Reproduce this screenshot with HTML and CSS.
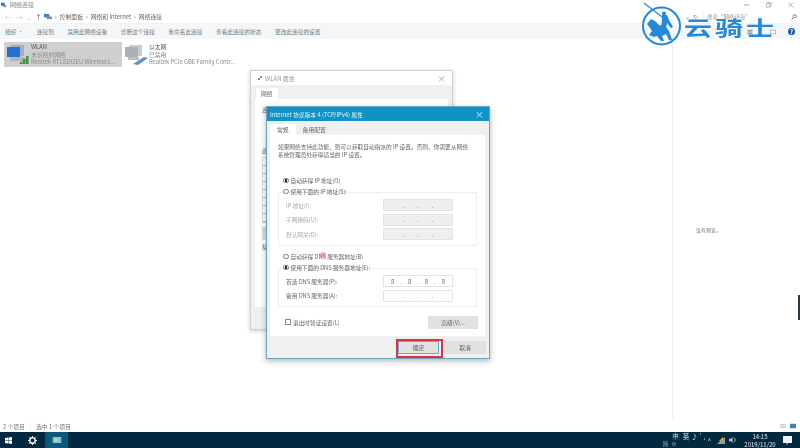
FILE: index.html
```html
<!DOCTYPE html>
<html lang="zh">
<head>
<meta charset="utf-8">
<title>网络连接</title>
<link rel="stylesheet" href="styles.css">
</head>
<body>
<div class="app">
  <header class="titlebar">
    <svg class="title-icon" viewBox="0 0 8 8"><rect x="0" y="1" width="5" height="4" fill="#2a6fb8"/><rect x="3" y="4" width="4" height="3" fill="#6aa7df"/></svg>
    <span class="title-text">网络连接</span>
    <div class="winbtns">
      <svg viewBox="0 0 7 7"><path d="M0 3.5H6" stroke="#999" fill="none"/></svg>
      <svg viewBox="0 0 7 7"><path d="M.5 2H4.500V6H.5ZM2 2V.5H6V4.500H4.500" stroke="#999" fill="none" stroke-width=".8"/></svg>
      <svg viewBox="0 0 7 7"><path d="M.5 .5L6 6M6 .5L.5 6" stroke="#999" fill="none" stroke-width=".8"/></svg>
    </div>
  </header>
  <nav class="addressbar">
    <div class="navarrows">
      <span class="arrow faint">←</span><span class="arrow faint">→</span><span class="arrow faint small">⌄</span><span class="arrow">↑</span>
    </div>
    <svg class="crumb-icon" viewBox="0 0 9 8"><rect x="0" y="1" width="6" height="4" fill="#3b83c9"/><rect x="3" y="4" width="6" height="3" fill="#7a8da0"/></svg>
    <div class="crumbs"><span>›</span><span>控制面板</span><span>›</span><span>网络和 Internet</span><span>›</span><span>网络连接</span></div>
    <div class="addr-spacer"></div>
    <div class="addr-tools"><span>⌄</span><span>↻</span></div>
    <div class="searchbox"><span>搜索“网络连接”</span><svg viewBox="0 0 6 6"><circle cx="3.700" cy="2.300" r="1.600" stroke="#666" fill="none" stroke-width=".8"/><path d="M2.600 3.400L.6 5.400" stroke="#666"/></svg></div>
  </nav>
  <div class="toolbar">
    <span class="tool first">组织 ·</span>
    <span class="tool">连接到</span>
    <span class="tool">禁用此网络设备</span>
    <span class="tool">诊断这个连接</span>
    <span class="tool">重命名此连接</span>
    <span class="tool">查看此连接的状态</span>
    <span class="tool">更改此连接的设置</span>
    <span class="toolbar-spacer"></span>
    <svg class="viewicon view-a" viewBox="0 0 8 8"><rect width="8" height="8" fill="#ddd"/><path d="M1 2H7M1 4H7M1 6H7" stroke="#888"/></svg>
    <svg class="viewicon view-b" viewBox="0 0 8 8"><rect x=".5" y="1.500" width="7" height="5" fill="#fff" stroke="#aaa"/></svg>
    <span class="help">?</span>
  </div>
  <main class="content">
    <section class="files">
      <div class="conn selected">
        <svg class="conn-icon" viewBox="0 0 24 20">
          <rect x="5" y="0" width="13" height="11" fill="#9fb2c4"/>
          <rect x="1" y="2" width="13" height="10" fill="#2a6fd0"/>
          <rect x="4" y="12" width="14" height="4" fill="#aeb6bd"/>
          <path d="M14 19H16V17H14ZM17 19H19V14H17ZM20 19H22V11H20Z" fill="#3f9a3c"/>
          <path d="M13 19L23 19L23 10Z" fill="#3f9a3c" opacity=".6"/>
        </svg>
        <div class="conn-text"><b>WLAN</b><span>未识别的网络</span><span>Realtek RTL8192EU Wireless L...</span></div>
      </div>
      <div class="conn">
        <svg class="conn-icon" viewBox="0 0 24 20">
          <rect x="5" y="0" width="13" height="11" fill="#c9cdd0"/>
          <rect x="1" y="2" width="13" height="10" fill="#aab0b5"/>
          <rect x="4" y="12" width="11" height="3" fill="#b8bec3"/>
          <path d="M9 19L20 12L24 13L14 20Z" fill="#5a93c4"/>
        </svg>
        <div class="conn-text"><b>以太网</b><span>已禁用</span><span>Realtek PCIe GBE Family Contr...</span></div>
      </div>
    </section>
    <aside class="preview">没有预览。</aside>
  </main>
  <div class="statusbar">
    <span>2 个项目</span><i></i><span>选中 1 个项目</span>
    <span class="toolbar-spacer"></span>
    <svg class="viewicon" viewBox="0 0 8 8"><path d="M0 2H8M0 4H8M0 6H8" stroke="#bbb"/></svg>
    <svg class="viewicon" viewBox="0 0 8 8"><rect y="1" width="8" height="6" fill="#3f7fc0"/></svg>
  </div>
  <footer class="taskbar">
    <svg class="start" viewBox="0 0 8 8"><path d="M0 1.200L3.500 .7V3.800H0ZM4 .6L8 0V3.800H4ZM0 4.200H3.500V7.300L0 6.800ZM4 4.200H8V8L4 7.400Z" fill="#fff"/></svg>
    <svg class="gear" viewBox="0 0 10 10"><circle cx="5" cy="5" r="3" fill="none" stroke="#fff" stroke-width="1.600"/><path d="M5 0V2M5 8V10M0 5H2M8 5H10M1.500 1.500L3 3M7 7L8.500 8.500M8.500 1.500L7 3M3 7L1.500 8.500" stroke="#fff" stroke-width="1.100"/></svg>
    <div class="task-active"><svg viewBox="0 0 10 7"><rect width="10" height="7" fill="#7fc4e6"/><rect x="2" y="2" width="4" height="3" fill="#e6cf78"/></svg></div>
    <span class="toolbar-spacer"></span>
    <div class="tray">
      <div class="imebar">
        <div class="ime-top"><span class="ime-box">中</span><span class="ime">英</span><span class="ime">♪</span><span class="ime">'</span><span class="ime">,</span></div>
        <div class="ime-low"><span>简</span><span>⊕</span></div>
      </div>
      <span class="chev">^</span>
      <svg class="tray-net" viewBox="0 0 9 9"><path d="M0 9L9 9L9 1Z" fill="#9a9a9a"/><path d="M3 6L7 2" stroke="#e0b93a" stroke-width="1.500"/></svg>
      <svg class="tray-vol" viewBox="0 0 9 9"><path d="M0 3H2L4 1V8L2 6H0Z" fill="#bbb"/><path d="M6 2Q8 4.500 6 7" stroke="#bbb" fill="none"/></svg>
      <div class="clock"><span>14:15</span><span>2019/11/20</span></div>
      <svg class="tray-note" viewBox="0 0 9 9"><path d="M0 0H9V7H5L3.500 9V7H0Z" fill="#eef2f4"/></svg>
    </div>
  </footer>
</div>

<div class="scroll-tab"></div>

<div class="dialog back">
  <div class="back-title"><span class="mini">▗▘</span><span>WLAN 属性</span><span class="grow"></span><span class="x">×</span></div>
  <div class="tabrow"><span class="tab on">网络</span></div>
  <div class="back-panel">
    <p class="frag">连</p>
    <p class="frag gap">此</p>
    <div class="back-list"></div>
    <div class="back-btn"></div>
    <p class="frag low">描</p>
  </div>
</div>

<div class="dialog front">
  <div class="front-title"><span>Internet 协议版本 4 (TCP/IPv4) 属性</span><span class="grow"></span><span class="x white">×</span></div>
  <div class="tabrow front-tabs"><span class="tab on">常规</span><span class="tab">备用配置</span></div>
  <div class="panel">
    <p class="intro">如果网络支持此功能，则可以获取自动指派的 IP 设置。否则，你需要从网络<br>系统管理员处获得适当的 IP 设置。</p>
    <div class="radio-row r1"><i class="radio checked"></i>自动获得 IP 地址(O)</div>
    <div class="radio-row"><i class="radio"></i>使用下面的 IP 地址(S):</div>
    <div class="group ipgroup">
      <div class="field dim"><span>IP 地址(I):</span><div class="ip disabled"><u>.</u><u>.</u><u>.</u></div></div>
      <div class="field dim"><span>子网掩码(U):</span><div class="ip disabled"><u>.</u><u>.</u><u>.</u></div></div>
      <div class="field dim"><span>默认网关(D):</span><div class="ip disabled"><u>.</u><u>.</u><u>.</u></div></div>
    </div>
    <div class="radio-row r3"><i class="radio"></i>自动获得 DNS 服务器地址(B)</div>
    <div class="radio-row"><i class="radio checked"></i>使用下面的 DNS 服务器地址(E):</div>
    <div class="group dnsgroup">
      <div class="field"><span>首选 DNS 服务器(P):</span><div class="ip"><b>8</b><u>.</u><b>8</b><u>.</u><b>8</b><u>.</u><b>8</b></div></div>
      <div class="field"><span>备用 DNS 服务器(A):</span><div class="ip"><u>.</u><u>.</u><u>.</u></div></div>
    </div>
    <div class="validate"><i class="check"></i><span>退出时验证设置(L)</span><span class="grow"></span><span class="btn adv">高级(V)...</span></div>
  </div>
  <div class="actions">
    <span class="btn ok">确定</span>
    <span class="btn cancel">取消</span>
  </div>
  <div class="red-box"></div>
</div>

<div class="cursor-dot"></div>

<div class="logo">
  <svg class="logo-mark" viewBox="0 0 44 48">
    <circle cx="21.500" cy="26" r="18.500" fill="none" stroke="#2389d8" stroke-width="2"/>
    <path d="M4 3L26 20" stroke="#2389d8" stroke-width="1.200"/>
    <circle cx="24" cy="13.500" r="2" fill="#2389d8"/>
    <path d="M22 15L27 15L29 20L33 27L31 28L27 23L26 28L21 28L22 20Z" fill="#2389d8"/>
    <path d="M7 24L11 19L15 21L19 25L26 27L29 31L32 40L29 40L26 34L22 36L24 41L21 41L17 36L14 37L9 35L12 31L10 28Z" fill="#2389d8"/>
  </svg>
  <span class="logo-text">云骑士</span>
</div>
```
FILE: styles.css
```css
* { box-sizing: border-box; }
html, body { margin: 0; padding: 0; width: 800px; height: 448px; overflow: hidden; background: #fff; }
body { position: relative; font-family: "Noto Sans CJK SC", "Noto Sans", sans-serif; font-size: 6px; color: #555; }
p { margin: 0; }
i, u { font-style: normal; text-decoration: none; }
.grow, .toolbar-spacer, .addr-spacer { flex: 1; }

.app { width: 800px; height: 448px; display: flex; flex-direction: column; filter: blur(.45px); }

.titlebar { height: 9px; display: flex; align-items: center; padding-left: 1px; color: #888; }
.title-icon { width: 6px; height: 6px; margin-right: 3px; }
.title-text { font-size: 6px; }
.winbtns { margin-left: auto; display: flex; gap: 16px; padding-right: 6px; }
.winbtns svg { width: 6px; height: 6px; }

.addressbar { height: 14px; margin-top: 1px; padding-left: 3px; display: flex; align-items: center; font-size: 5.800px; color: #666; border-bottom: 1px solid #f3f3f3; }
.navarrows { display: flex; width: 41px; font-size: 7px; color: #555; }
.arrow { width: 11px; text-align: center; }
.arrow.faint { color: #ccc; }
.arrow.small { width: 9px; }
.crumb-icon { width: 8px; height: 7px; }
.crumbs { display: flex; gap: 3px; margin-left: 3px; }
.addr-tools { display: flex; gap: 3px; color: #888; width: 18px; }
.searchbox { width: 97px; height: 11px; display: flex; align-items: center; padding: 0 3px; justify-content: space-between; color: #999; font-size: 5.500px; border-left: 1px solid #f2f2f2; }
.searchbox svg { width: 6px; height: 6px; }

.toolbar { height: 15px; background: #f5f6f8; display: flex; align-items: center; font-size: 5.700px; color: #6f7a85; padding-right: 5px; }
.tool { margin-left: 13.500px; }
.tool.first { margin-left: 5px; }
.viewicon { width: 6px; height: 6px; margin-right: 4px; }
.view-a { margin-right: 17px; }
.view-b { margin-right: 12px; }
.help { width: 7px; height: 7px; border-radius: 50%; background: #1a5fa8; color: #fff; font-size: 6px; line-height: 7px; text-align: center; font-weight: bold; }

.content { flex: 1; display: flex; min-height: 0; }
.files { flex: 1; display: flex; align-items: flex-start; padding: 3px 0 0 4px; }
.conn { width: 118px; height: 25px; display: flex; padding: 1px 2px; }
.conn.selected { background: #cfcfcf; }
.conn-icon { width: 24px; height: 20px; flex: none; margin-top: 2px; }
.conn-text { display: flex; flex-direction: column; margin-left: 1px; color: #8a8a8a; font-size: 5.800px; line-height: 7.600px; white-space: nowrap; }
.conn-text b { font-weight: normal; color: #555; }
.preview { width: 128px; border-left: 1px solid #f0f0f0; display: flex; align-items: center; padding-left: 23px; color: #777; font-size: 5px; white-space: nowrap; }

.statusbar { height: 12px; display: flex; align-items: center; padding-left: 3px; color: #777; font-size: 5.800px; }
.statusbar i { width: 1px; height: 9px; background: #eee; margin: 0 5px; }

.taskbar { height: 16px; background: #02293f; display: flex; align-items: center; padding-left: 5px; }
.start { width: 7px; height: 7px; }
.gear { width: 9px; height: 9px; margin-left: 16px; }
.task-active { width: 23px; height: 16px; margin-left: 8px; background: #0c5878; display: flex; align-items: center; justify-content: center; }
.task-active svg { width: 10px; height: 6px; }
.tray { display: flex; align-items: center; color: #dfe6ea; height: 16px; padding-right: 8px; }
.imebar { width: 42px; display: flex; flex-direction: column; line-height: 8px; }
.ime-top { display: flex; align-items: center; }
.ime-box { font-size: 5.500px; width: 8px; height: 7px; line-height: 7px; margin-left: 9px; margin-right: 3px; text-align: center; background: #0e3c55; flex: none; }
.ime { font-size: 6.500px; margin-right: 2px; flex: none; }
.ime-low { display: flex; gap: 3px; font-size: 5.500px; color: #a9b6bd; }
.chev { margin-left: 3px; margin-right: 6px; }
.tray-net { width: 8px; height: 8px; margin-right: 4px; }
.tray-vol { width: 8px; height: 8px; }
.clock { width: 40px; margin-left: 3px; display: flex; flex-direction: column; align-items: center; font-size: 6px; line-height: 8px; margin-top: 1px; }
.tray-note { width: 9px; height: 9px; margin-left: 3px; }

.scroll-tab { position: absolute; right: 0; top: 295px; width: 2px; height: 25px; background: #2b3a44; }

.dialog { position: absolute; filter: blur(.45px); display: flex; flex-direction: column; }
.back { left: 250px; top: 70px; width: 203px; height: 260px; background: #f0f0f0; border: 1px solid #cfd3d6; box-shadow: 0 1px 4px rgba(0,0,0,.22); }
.back-title { height: 14px; background: #fff; display: flex; align-items: center; padding: 0 6px 0 5px; color: #999; font-size: 6px; gap: 1px; }
.mini { font-size: 4px; color: #888; }
.x { font-size: 9px; color: #aaa; line-height: 9px; }
.x.white { color: #d6eef7; }
.tabrow { display: flex; height: 14px; padding: 3px 0 0 5px; font-size: 5.800px; }
.tab { padding: 0 5px; height: 11px; line-height: 11px; color: #666; }
.tab.on { background: #fff; }
.back-panel { margin: 0 4px; height: 208px; background: #fff; padding: 6px 7px; color: #666; font-size: 5.800px; }
.frag { line-height: 9px; }
.frag.gap { margin-top: 32px; }
.back-list { height: 66px; width: 30px; border: 1px solid #ddd; border-right: 0; margin-top: 2px; background: repeating-linear-gradient(#fff 0, #fff 7px, #bbb 7px, #bbb 8px); }
.back-btn { height: 13px; width: 10px; background: #dcdcdc; margin-top: 4px; }
.frag.low { margin-top: 2px; }

.front { left: 266px; top: 106px; width: 224px; height: 253px; background: #f0f0f0; border: 1px solid #6ba6c6; box-shadow: 0 2px 6px rgba(0,0,0,.3); }
.front-title { height: 14px; background: #0f93c4; color: #eaf6fb; display: flex; align-items: center; padding: 0 5px 0 3px; font-size: 5.800px; flex: none; }
.front-tabs { padding: 3px 0 0 3px; flex: none; }
.front-tabs .tab { padding: 0 7px; }
.panel { margin: 0 4px 0 3px; height: 201px; background: #fff; padding: 8px 8px 0 8px; color: #666; font-size: 5.700px; flex: none; }
.intro { line-height: 8px; white-space: nowrap; }
.radio-row { height: 11px; display: flex; align-items: center; padding-left: 5px; gap: 2px; white-space: nowrap; }
.radio-row.r1 { margin-top: 16px; }
.radio-row.r3 { margin-top: 5px; }
.radio { width: 5.500px; height: 5.500px; border: 1px solid #777; border-radius: 50%; background: #fff; }
.radio.checked { background: radial-gradient(circle, #333 0 55%, #fff 60%); }
.group { width: 199px; border: 1px solid #efefef; margin-top: -5px; padding: 5px 23px 0 7px; }
.ipgroup { height: 54px; }
.dnsgroup { height: 39px; }
.field { height: 14.500px; display: flex; align-items: center; justify-content: space-between; }
.field.dim { color: #aaa; }
.ip { width: 70px; height: 12px; border: 1px solid #e3e3e3; display: flex; align-items: center; justify-content: space-between; padding: 0 7px; color: #666; font-size: 5.800px; }
.ip b { font-weight: normal; }
.ip.disabled { background: #efefef; }
.ip u:first-child { margin-left: 12px; }
.ip u:last-child { margin-right: 12px; }
.validate { display: flex; align-items: center; height: 14px; margin-top: 8px; padding-left: 7px; gap: 2px; width: 200px; }
.check { width: 6px; height: 6px; border: 1px solid #888; background: #fff; }
.btn { display: flex; align-items: center; justify-content: center; background: #e1e1e1; color: #666; font-size: 5.800px; border: 1px solid #e1e1e1; }
.adv { width: 50px; height: 13px; }
.actions { display: flex; justify-content: flex-end; gap: 5px; padding: 5px 3px 0 0; }
.ok { width: 41px; height: 13px; border-color: #63a9d6; }
.cancel { width: 42px; height: 13px; }
.red-box { position: absolute; left: 129px; top: 232px; width: 47px; height: 19px; border: 2px solid #d8353f; }

.cursor-dot { position: absolute; left: 320px; top: 252px; width: 6px; height: 6px; border-radius: 50%; background: rgba(235,110,110,.55); filter: blur(.5px); }

.logo { position: absolute; left: 640px; top: 0; display: flex; align-items: center; filter: blur(.3px); }
.logo-mark { width: 44px; height: 48px; }
.logo-text { font-weight: 700; font-size: 28px; line-height: 28px; color: #2389d8; letter-spacing: 3px; margin-top: 6px; transform: scaleY(.72); }
```
